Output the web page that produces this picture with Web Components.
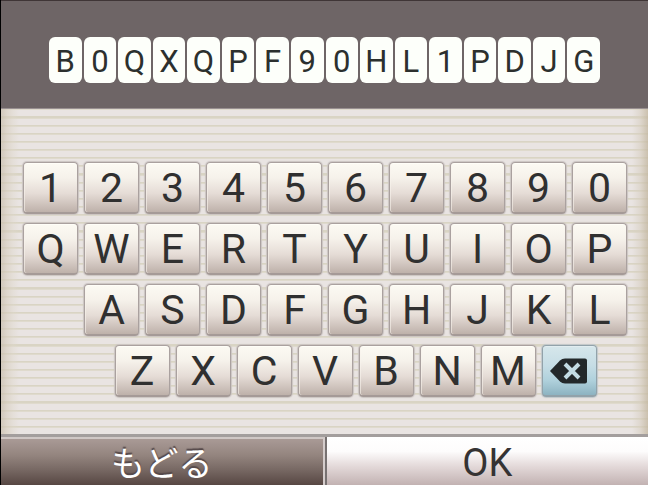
<!DOCTYPE html>
<html lang="ja">
<head>
<meta charset="utf-8">
<meta name="viewport" content="width=device-width, initial-scale=1">
<title>Code entry</title>
<style>
  html, body { margin: 0; }
  body { background: #e9e4e1; color: #303030; font-family: Roboto, "Noto Sans CJK JP", sans-serif; }
</style>
</head>
<body>
<code-screen>
  <code-display slot="display" value="B0QXQPF90HL1PDJG"></code-display>
  <key-board slot="keys"></key-board>
  <action-button slot="actions" kind="back">もどる</action-button>
  <action-button slot="actions" kind="ok">OK</action-button>
</code-screen>

<template id="screen-template">
  <style>
    :host {
      display: flex; flex-direction: column; min-height: 100vh; box-sizing: border-box;
      border-left: 1px solid #000;
    }
    header { background: #6e6566; border-top: 1px solid #3f3536; border-bottom: 1px solid #999091; padding: 36px 48px 25px; }
    main {
      flex: 1;
      padding: 53px 21px 37px 22px;
      background:
        linear-gradient(90deg, #c9bfaebb 0, #d6cdbe99 6px, #ded7ca66 12px, transparent 18px),
        linear-gradient(270deg, #c4b8a2cc 0, #d6cdbe88 8px, transparent 16px),
        repeating-linear-gradient(#d9d4c4 0 1px, #dfdacd 1px 2px, #e9e4e2 2px 8px) 0 8px / 100% 57px;
    }
    footer {
      display: grid; grid-template-columns: 1fr 1fr;
      border-top: 3px solid #a39e9d;
    }
  </style>
  <header><slot name="display"></slot></header>
  <main><slot name="keys"></slot></main>
  <footer><slot name="actions"></slot></footer>
</template>

<template id="display-template">
  <style>
    :host { display: flex; gap: 2px; }
    span {
      flex: 1 1 0; min-width: 0; height: 46px; box-sizing: border-box; padding-top: 3px;
      display: flex; align-items: center; justify-content: center;
      background: #fdfffa; border-radius: 6px;
      color: #2c302e; font-size: 31px; line-height: 43px;
    }
  </style>
</template>

<template id="keyboard-template">
  <style>
    :host { display: grid; grid-template-columns: repeat(20, 1fr); gap: 9px 6px; }
    key-cap { grid-column-end: span 2; }
    .third { grid-column-start: 3; }
    .fourth { grid-column-start: 4; }
  </style>
</template>

<template id="key-template">
  <style>
    :host { display: block; min-width: 0; }
    button {
      display: flex; align-items: center; justify-content: center;
      width: 100%; height: 52px; box-sizing: border-box; margin: 0; padding: 2px 0 0;
      border: 1px solid #aaa19f; border-bottom: 2px solid #a59a97; border-radius: 4px;
      background: linear-gradient(#fcfaf3 0, #f6f2eb 30%, #e5dcd6 62%, #beb1aa 100%);
      box-shadow: 0 0 1px 1px #cbc5c3, inset 0 1px 0 #fffef8, inset 1px 0 0 #f8f3ed99;
      color: #303030; font: 41px/47px Roboto, sans-serif;
    }
    :host([erase]) button {
      background: linear-gradient(#d6e7eb 0, #c6dde5 40%, #b0d1dc 70%, #8db3c1 100%);
      border-color: #92a2aa;
      box-shadow: 0 0 1px 1px #c1c8cb, inset 0 1px 0 #e1edf0;
      padding: 0;
    }
    svg { width: 38px; height: 26px; display: block; }
  </style>
  <button type="button"><slot></slot></button>
</template>

<template id="action-template">
  <style>
    :host { display: block; }
    button {
      display: flex; align-items: center; justify-content: center;
      width: 100%; height: 48px; box-sizing: border-box; border: 0; margin: 0; padding: 0;
    }
    :host([kind="back"]) button {
      border-top: 2px solid #d0c8c6; border-right: 2px solid #d4cccb;
      background: linear-gradient(#a99a96 0, #94857f 35%, #796a65 65%, #574743 100%);
      color: #fff; font: 400 34px/44px "Noto Sans CJK JP", sans-serif;
      text-shadow: 0 -2px 1px #55494a;
    }
    :host([kind="ok"]) button {
      border-left: 2px solid #777171;
      background: linear-gradient(#fff 0, #fdfcfc 30%, #e4dada 60%, #c2b2b2 100%);
      color: #353333; font: 38px/44px Roboto, sans-serif;
      padding-top: 4px;
    }
  </style>
  <button type="button"><slot></slot></button>
</template>

<script>
  function attach(el, id) {
    const root = el.attachShadow({ mode: "open" });
    root.append(document.getElementById(id).content.cloneNode(true));
    return root;
  }

  class CodeScreen extends HTMLElement {
    constructor() { super(); attach(this, "screen-template"); }
  }

  class CodeDisplay extends HTMLElement {
    constructor() { super(); attach(this, "display-template"); }
    connectedCallback() {
      for (const letter of this.getAttribute("value")) {
        const tile = document.createElement("span");
        tile.textContent = letter;
        this.shadowRoot.append(tile);
      }
    }
  }

  class KeyCap extends HTMLElement {
    constructor() { super(); attach(this, "key-template"); }
    connectedCallback() {
      if (!this.hasAttribute("erase")) return;
      const button = this.shadowRoot.querySelector("button");
      button.setAttribute("aria-label", "Backspace");
      button.innerHTML = `<svg viewBox="0 0 38 26" aria-hidden="true">
        <path d="M0 13 L10 2.5 Q12 0.5 15 0.5 H35 Q37 0.5 37 2.5 V23.5 Q37 25.5 35 25.5 H15 Q12 25.5 10 23.5 Z" fill="#23282a"/>
        <path d="M15 6 L29 20 M29 6 L15 20" stroke="#c3dce4" stroke-width="4" fill="none"/></svg>`;
    }
  }

  class KeyBoard extends HTMLElement {
    constructor() { super(); attach(this, "keyboard-template"); }
    connectedCallback() {
      const rows = [["1234567890", ""], ["QWERTYUIOP", ""], ["ASDFGHJKL", "third"], ["ZXCVBNM", "fourth"]];
      for (const [letters, place] of rows) {
        [...letters].forEach((letter, i) => {
          const key = document.createElement("key-cap");
          key.textContent = letter;
          if (i === 0 && place) key.className = place;
          this.shadowRoot.append(key);
        });
      }
      const erase = document.createElement("key-cap");
      erase.setAttribute("erase", "");
      this.shadowRoot.append(erase);
    }
  }

  class ActionButton extends HTMLElement {
    constructor() { super(); attach(this, "action-template"); }
  }

  customElements.define("code-screen", CodeScreen);
  customElements.define("code-display", CodeDisplay);
  customElements.define("key-cap", KeyCap);
  customElements.define("key-board", KeyBoard);
  customElements.define("action-button", ActionButton);
</script>
</body>
</html>
